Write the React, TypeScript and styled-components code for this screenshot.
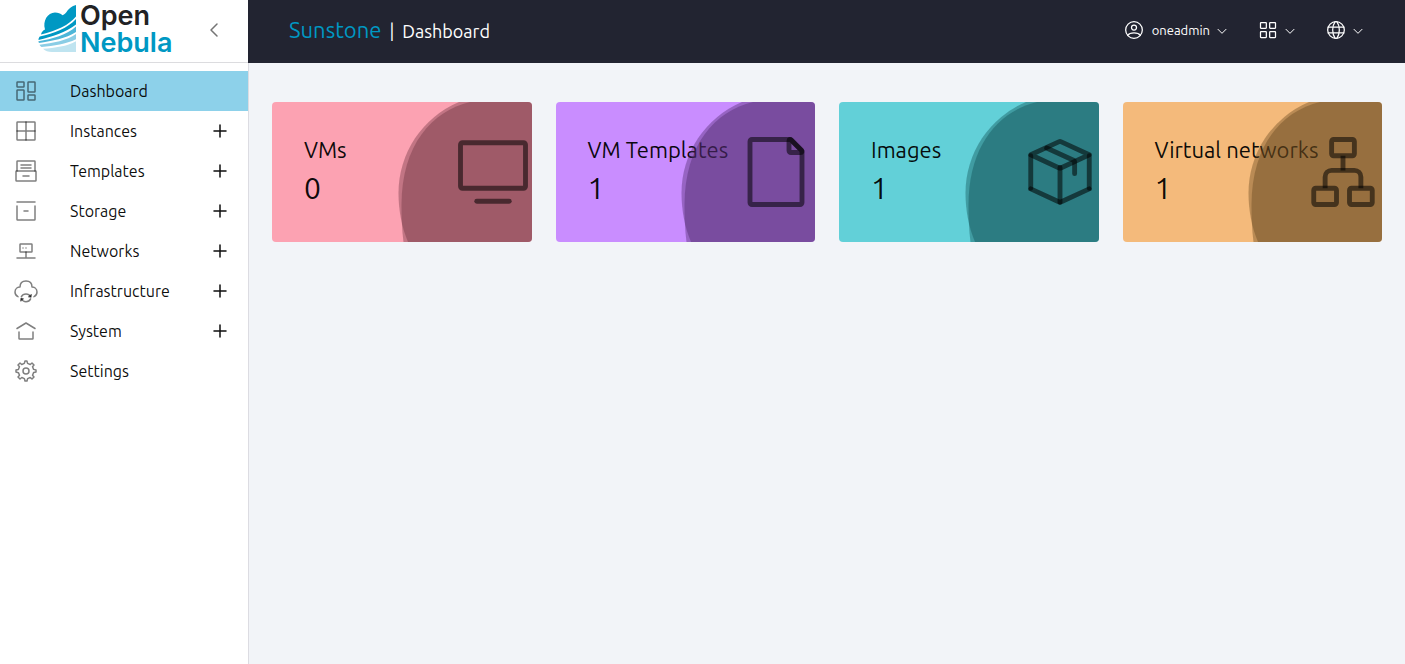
import React from "react";
import styled, { createGlobalStyle } from "styled-components";

const GlobalStyle = createGlobalStyle`
  *, *::before, *::after { box-sizing: border-box; }
  body {
    margin: 0;
    background: #f2f4f8;
    color: rgba(0, 0, 0, 0.87);
    font-family: Ubuntu, "Noto Sans", sans-serif;
    font-size: 16px;
  }
`;

const Shell = styled.div`
  display: grid;
  grid-template-columns: 248px 1fr;
  min-height: 100vh;
`;

const Sidebar = styled.aside`
  background: #fff;
`;

const Brand = styled.div`
  display: flex;
  align-items: center;
  justify-content: space-between;
  height: 63px;
  padding: 0 22px 2px 38px;
  border-bottom: 1px solid #dcdcdf;
`;

const Logo = styled.a`
  display: flex;
  align-items: center;
  gap: 4px;
  padding-bottom: 4px;
  text-decoration: none;
`;

const LogoText = styled.span`
  display: flex;
  flex-direction: column;
  padding-top: 1px;
  font: 600 27px/27px Inter, sans-serif;
  color: #222224;
`;

const LogoAccent = styled.span`
  color: #0098c3;
`;

const IconButton = styled.button`
  display: flex;
  align-items: center;
  padding: 0;
  border: 0;
  background: none;
  color: #757575;
  cursor: pointer;
`;

const NavList = styled.ul`
  margin: 0;
  padding: 8px 0;
  list-style: none;
`;

const NavLink = styled.a<{ $active?: boolean }>`
  display: flex;
  align-items: center;
  height: 40px;
  padding: 0 16px 0 14px;
  background: ${(p) => (p.$active ? "#8dd1ea" : "transparent")};
  color: rgba(0, 0, 0, 0.95);
  text-decoration: none;
`;

const NavToggle = styled.button`
  display: flex;
  align-items: center;
  width: 100%;
  height: 40px;
  padding: 0 16px 0 14px;
  border: 0;
  background: transparent;
  color: rgba(0, 0, 0, 0.95);
  font: inherit;
  text-align: left;
  cursor: pointer;
`;

const NavIcon = styled.span`
  display: flex;
  margin-right: 32px;
  color: rgba(0, 0, 0, 0.5);
`;

const NavLabel = styled.span`
  flex: 1;
`;

const Content = styled.div`
  display: flex;
  flex-direction: column;
  min-width: 0;
`;

const Header = styled.header`
  display: flex;
  align-items: center;
  justify-content: space-between;
  height: 63px;
  padding: 0 39px 3px 41px;
  background: #222431;
  color: #fff;
`;

const Title = styled.h1`
  display: flex;
  align-items: baseline;
  gap: 8px;
  margin: 0;
  font-size: 18px;
  font-weight: 400;
  line-height: 28px;
`;

const Product = styled.span`
  color: #0098c3;
  font-size: 22px;
`;

const Actions = styled.div`
  display: flex;
  gap: 28px;
`;

const HeaderButton = styled.button`
  display: flex;
  align-items: center;
  gap: 4px;
  padding: 0;
  border: 0;
  background: none;
  color: #fff;
  font: 400 13px/20px Ubuntu, "Noto Sans", sans-serif;
  cursor: pointer;
`;

const UserName = styled.span`
  padding-left: 4px;
`;

const Main = styled.main`
  flex: 1;
  padding: 39px 23px;
  border-left: 1px solid #dcdce2;
`;

const Cards = styled.div`
  display: grid;
  grid-template-columns: repeat(4, 1fr);
  gap: 24px;
`;

const Card = styled.a<{ $color: string }>`
  position: relative;
  overflow: hidden;
  padding: 32px;
  border-radius: 4px;
  background: ${(p) => p.$color};
  color: rgba(0, 0, 0, 0.95);
  text-decoration: none;
  white-space: nowrap;
`;

const CardTitle = styled.h2`
  margin: 0;
  font-size: 22px;
  font-weight: 400;
  line-height: 32px;
`;

const CardValue = styled.p`
  margin: 0;
  font-size: 30px;
  line-height: 44px;
`;

const Wave = styled.svg`
  position: absolute;
  top: 0;
  right: 0;
`;

const CardIcon = styled.span`
  position: absolute;
  top: 31px;
  right: 0;
  display: flex;
  color: rgba(0, 0, 0, 0.54);
`;

type IconProps = { size?: number; weight?: number; children: React.ReactNode };

const Icon = ({ size = 24, weight = 1.5, children }: IconProps) => (
  <svg
    width={size}
    height={size}
    viewBox="0 0 24 24"
    fill="none"
    stroke="currentColor"
    strokeWidth={weight}
    strokeLinecap="round"
    strokeLinejoin="round"
    aria-hidden="true"
  >
    {children}
  </svg>
);

const ChevronDown = () => (
  <Icon size={16}>
    <path d="M6 11l6 6 6-6" />
  </Icon>
);

const navItems = [
  {
    label: "Dashboard",
    active: true,
    icon: (
      <>
        <rect x="3" y="3" width="7" height="5" rx=".6" />
        <rect x="14" y="3" width="7" height="10" rx=".6" />
        <rect x="3" y="11" width="7" height="10" rx=".6" />
        <rect x="14" y="16" width="7" height="5" rx=".6" />
      </>
    ),
  },
  {
    label: "Instances",
    group: true,
    icon: (
      <>
        <rect x="3" y="3" width="18" height="18" rx=".6" />
        <path d="M12 3v18M3 12h18" />
      </>
    ),
  },
  {
    label: "Templates",
    group: true,
    icon: (
      <>
        <path d="M7 6h10M7 9h10M9 17h6" />
        <path d="M3 12V2.6a.6.6 0 0 1 .6-.6h16.8a.6.6 0 0 1 .6.6V12" />
        <path d="M3 12h-.4a.6.6 0 0 0-.6.6v8.8a.6.6 0 0 0 .6.6h18.8a.6.6 0 0 0 .6-.6v-8.8a.6.6 0 0 0-.6-.6z" />
      </>
    ),
  },
  {
    label: "Storage",
    group: true,
    icon: (
      <>
        <path d="M3 3h18M10 12h4" />
        <path d="M3 7v13.4a.6.6 0 0 0 .6.6h16.8a.6.6 0 0 0 .6-.6V7" />
      </>
    ),
  },
  {
    label: "Networks",
    group: true,
    icon: (
      <>
        <path d="M3 19h18M12 19v-6" />
        <rect x="6" y="5" width="12" height="8" rx=".6" />
        <path d="M9 9h.01M12 9h.01" />
      </>
    ),
  },
  {
    label: "Infrastructure",
    group: true,
    icon: (
      <>
        <path d="M20 17.6c1.5-.6 3-1.9 3-4.6 0-4-3.3-5-5-5 0-2 0-6-6-6S6 6 6 8c-1.700 0-5 1-5 5 0 2.700 1.500 4 3 4.600" />
        <path d="M16.500 17.500c-.8-1.500-2.500-2.500-4.500-2.500-2.100 0-3.800 1.100-4.600 2.600" />
        <path d="M7.500 20c.8 1.500 2.500 2.700 4.500 2.700 2.100 0 3.800-1.200 4.600-2.800" />
        <path d="M14.800 17.700l2 .3.500-2.200zM9.100 19.800l-2-.2-.4 2.200z" fill="currentColor" />
      </>
    ),
  },
  {
    label: "System",
    group: true,
    icon: (
      <>
        <path d="M3 9.500L12 4l9 5.500" />
        <path d="M19 13v6.400a.6.6 0 0 1-.6.6H5.600a.6.6 0 0 1-.6-.6V13" />
      </>
    ),
  },
  {
    label: "Settings",
    icon: (
      <>
        <circle cx="12" cy="12" r="3" />
        <path d="M19.622 10.395l-1.097-2.650L20 6l-2-2-1.735 1.483-2.707-1.113L12.935 2h-1.954l-.632 2.401-2.645 1.115L6 4 4 6l1.453 1.789-1.080 2.657L2 11v2l2.401.656L5.516 16.300 4 18l2 2 1.791-1.460 2.606 1.072L11 22h2l.604-2.387 2.651-1.098C16.697 18.831 18 20 18 20l2-2-1.484-1.751 1.098-2.651 2.386-.621L22 11z" />
      </>
    ),
  },
];

const cards = [
  {
    title: "VMs",
    value: 0,
    color: "#fca2b2",
    wave: "rgb(107, 51, 63)",
    icon: (
      <>
        <path d="M7 21h10" />
        <rect x="2" y="3" width="20" height="14" rx=".6" />
      </>
    ),
  },
  {
    title: "VM Templates",
    value: 1,
    color: "#c98dff",
    wave: "rgb(77, 39, 106)",
    icon: (
      <>
        <path d="M4 21.400V2.600a.6.6 0 0 1 .6-.6h11.652a.6.6 0 0 1 .424.176l3.148 3.148a.6.6 0 0 1 .176.425V21.400a.6.6 0 0 1-.6.6H4.600a.6.6 0 0 1-.6-.6z" />
        <path d="M16 5.400V2.354a.354.354 0 0 1 .604-.25l3.292 3.292a.354.354 0 0 1-.25.604H16.600a.6.6 0 0 1-.6-.6z" />
      </>
    ),
  },
  {
    title: "Images",
    value: 1,
    color: "#62d0d8",
    wave: "rgb(15, 78, 82)",
    icon: (
      <>
        <path d="M3 17V7" />
        <path d="M21 17V7" />
        <path d="M12 21.300v-10.700" />
        <path d="M3 6.700l8.750-4.050a.6.6 0 0 1 .5 0L21 6.700l-8.750 4.050a.6.6 0 0 1-.5 0z" />
        <path d="M3 17.200l8.750 4.050a.6.6 0 0 0 .5 0L21 17.200" />
        <path d="M7.900 4.600l8.250 3.800a.6.6 0 0 1 .35.550v3.550" />
      </>
    ),
  },
  {
    title: "Virtual networks",
    value: 1,
    color: "#f4ba7b",
    wave: "rgb(100, 69, 31)",
    icon: (
      <>
        <rect x="3" y="17" width="7" height="5" rx=".6" />
        <rect x="14" y="17" width="7" height="5" rx=".6" />
        <rect x="8.500" y="2" width="7" height="5" rx=".6" />
        <path d="M6.500 17v-3.500a2 2 0 0 1 2-2h7a2 2 0 0 1 2 2V17" strokeLinecap="butt" />
        <path d="M12 11.500V7" strokeLinecap="butt" />
      </>
    ),
  },
];

const CloudMark = () => (
  <svg width="38" height="48" viewBox="0 0 38 48" aria-hidden="true">
    <path fill="#0098c3" d="M38 1v11.500C31 21 19 26.500 3 30.500c.5-2.500 2-4 4-5C4.500 17 9.500 8.500 17 8.500c3 0 5.500 1 7.500 2.800C29 10 29 3.500 38 1z" />
    <path fill="#0098c3" d="M38 15v5.500C28 28.500 14 32.500.500 36c0-1.500.5-2.500 1.300-3.500C16 29.500 30 24 38 15z" />
    <path fill="#4db6d8" d="M38 22.500v5.500c-10 6.500-24 9-37 11-.5-.8-.6-1.200-.6-1.800C14 35 29 31 38 22.500z" />
    <path fill="#8acde5" d="M38 30v5.200C28 40 16 41.700 3.500 43 2.500 42.200 2 41.500 1.500 40.700 15 39 29 36.500 38 30z" />
    <path fill="#bfe4f0" d="M38 37.200V48H14c-4 0-6.500-.8-9-3.200 12-1 24-2.500 33-7.600z" />
  </svg>
);

export default function App() {
  return (
    <>
      <GlobalStyle />
      <Shell>
        <Sidebar>
          <Brand>
            <Logo href="#">
              <CloudMark />
              <LogoText>
                Open
                <LogoAccent>Nebula</LogoAccent>
              </LogoText>
            </Logo>
            <IconButton type="button" aria-label="Collapse menu">
              <Icon>
                <path d="M15 6l-6 6 6 6" />
              </Icon>
            </IconButton>
          </Brand>
          <nav>
            <NavList>
              {navItems.map(({ label, icon, active, group }) => {
                const body = (
                  <>
                    <NavIcon>
                      <Icon>{icon}</Icon>
                    </NavIcon>
                    <NavLabel>{label}</NavLabel>
                  </>
                );
                return (
                  <li key={label}>
                    {group ? (
                      <NavToggle type="button" aria-expanded={false}>
                        {body}
                        <Icon>
                          <path d="M6 12h12M12 6v12" />
                        </Icon>
                      </NavToggle>
                    ) : (
                      <NavLink href="#" $active={active}>
                        {body}
                      </NavLink>
                    )}
                  </li>
                );
              })}
            </NavList>
          </nav>
        </Sidebar>
        <Content>
          <Header>
            <Title>
              <Product>Sunstone</Product>
              <span>|</span>
              <span>Dashboard</span>
            </Title>
            <Actions>
              <HeaderButton type="button">
                <Icon size={20}>
                  <circle cx="12" cy="12" r="10" />
                  <path d="M4.300 18.400S6.500 15.500 12 15.500s7.700 2.900 7.700 2.900" />
                  <circle cx="12" cy="9" r="3" />
                </Icon>
                <UserName>oneadmin</UserName>
                <ChevronDown />
              </HeaderButton>
              <HeaderButton type="button" aria-label="Views">
                <Icon size={20}>
                  <rect x="3" y="3" width="7" height="7" rx=".6" />
                  <rect x="14" y="3" width="7" height="7" rx=".6" />
                  <rect x="3" y="14" width="7" height="7" rx=".6" />
                  <rect x="14" y="14" width="7" height="7" rx=".6" />
                </Icon>
                <ChevronDown />
              </HeaderButton>
              <HeaderButton type="button" aria-label="Zones">
                <Icon size={20}>
                  <circle cx="12" cy="12" r="10" />
                  <path d="M13 2s3 4 3 10-3 10-3 10M11 22s-3-4-3-10 3-10 3-10M2.600 15.500h18.800M2.600 8.500h18.800" />
                </Icon>
                <ChevronDown />
              </HeaderButton>
            </Actions>
          </Header>
          <Main>
            <Cards>
              {cards.map((card) => (
                <Card key={card.title} href="#" $color={card.color}>
                  <CardTitle>{card.title}</CardTitle>
                  <CardValue>{card.value}</CardValue>
                  <Wave width="134" height="140" viewBox="126 0 134 140" fill={card.wave} aria-hidden="true">
                    <path fillOpacity=".4" d="M187 0A98.700 98.700 0 0 0 126.500 91C126.500 109 130 126 136 140H260V0z" />
                    <path fillOpacity=".4" d="M198 0C160 9 129.500 43 129.500 103C129.500 116 130 129 131.500 140H260V0z" />
                  </Wave>
                  <CardIcon>
                    <Icon size={78}>{card.icon}</Icon>
                  </CardIcon>
                </Card>
              ))}
            </Cards>
          </Main>
        </Content>
      </Shell>
    </>
  );
}
